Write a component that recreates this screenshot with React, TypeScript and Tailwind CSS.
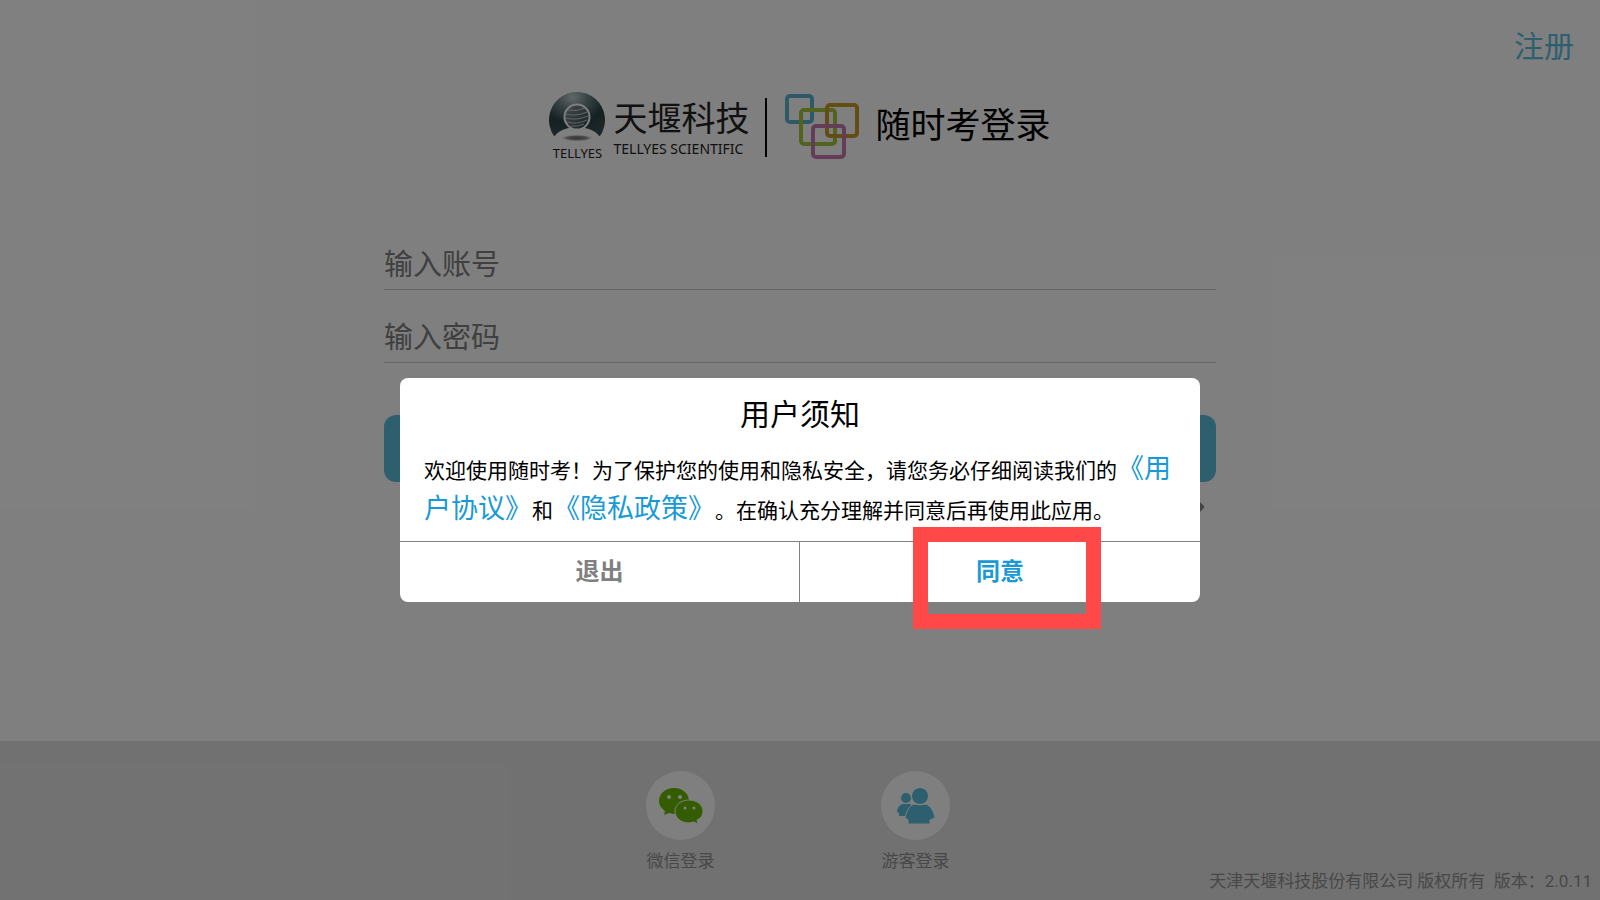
import { ChevronRight } from "lucide-react";
import { useState } from "react";

function TellyesMark() {
  return (
    <svg width="56" height="52" viewBox="0 0 56 52" aria-hidden="true">
      <defs>
        <radialGradient id="ball" cx="0.42" cy="0.12" r="0.9">
          <stop offset="0" stopColor="#c4d0d0" />
          <stop offset="0.3" stopColor="#71868a" />
          <stop offset="0.65" stopColor="#2b4248" />
          <stop offset="1" stopColor="#3c4c52" />
        </radialGradient>
        <radialGradient id="shade">
          <stop offset="0" stopColor="#666" />
          <stop offset="0.6" stopColor="#999" />
          <stop offset="1" stopColor="#fff" stopOpacity="0" />
        </radialGradient>
        <linearGradient id="core" x1="0" y1="0" x2="1" y2="1">
          <stop offset="0" stopColor="#8a9a9e" />
          <stop offset="1" stopColor="#2e4046" />
        </linearGradient>
      </defs>
      <path d="M5 46A28 28 0 1 1 51 46Z" fill="url(#ball)" />
      <path d="M5 47C9 41 15 39 20 38L28 35L36 38C41 39 47 41 51 47V52H5Z" fill="#fff" />
      <circle cx="28" cy="27" r="12.5" fill="url(#core)" stroke="#fff" strokeWidth="2" />
      <g stroke="#c3cccd" strokeWidth="1" fill="none">
        <path d="M19 20q8 2 17-2" />
        <path d="M17 24q9 3 21-2" />
        <path d="M17 28q10 3 22-2" />
        <path d="M18 32q9 3 20-2" />
        <path d="M22 36q7 1 13-2" />
      </g>
      <ellipse cx="28" cy="48" rx="17" ry="3.5" fill="url(#shade)" />
    </svg>
  );
}

function SquaresMark() {
  return (
    <svg width="76" height="66" viewBox="0 0 76 66" fill="none" strokeWidth="4" aria-hidden="true">
      <rect x="4" y="2" width="25" height="26" rx="3" stroke="#5cb4d0" />
      <rect x="18" y="16" width="34" height="34" rx="3" stroke="#a4c63c" />
      <rect x="44" y="11" width="30" height="31" rx="3" stroke="#c69a2a" />
      <rect x="30" y="32" width="31" height="31" rx="3" stroke="#c77ab0" />
    </svg>
  );
}

function WechatIcon() {
  return (
    <svg width="46" height="38" viewBox="0 0 46 38" aria-hidden="true">
      <path d="M16 1C7 1 1 7 1 14C1 18 3 21 7 24L6 28L11 26Q14 27 18 27C26 27 31 21 31 14C31 7 25 1 16 1Z" fill="#68b800" />
      <path d="M31 13C23 13 17 18 17 24C17 31 23 36 31 36L36 35L40 37L39 33C43 31 45 28 45 24C45 18 39 13 31 13Z" fill="#68b800" stroke="#fff" />
      <g fill="#fff">
        <circle cx="11" cy="10" r="2" />
        <circle cx="22" cy="10" r="2" />
        <circle cx="27" cy="21" r="1.5" />
        <circle cx="36" cy="21" r="1.5" />
      </g>
    </svg>
  );
}

function GuestIcon() {
  return (
    <svg width="38" height="38" viewBox="0 0 38 38" fill="#5bbfdf" aria-hidden="true">
      <circle cx="9" cy="11" r="5" />
      <path d="M5 17H13L16 19V29H2V26L0 25C0 21 2 19 5 17Z" />
      <circle cx="23" cy="9" r="8" />
      <path d="M17 17Q23 19 29 17C34 19 37 25 38 31L33 33V37H11V33L8 31C9 25 12 19 17 17Z" stroke="#fff" />
    </svg>
  );
}

const fields = [
  { id: "account", type: "text", placeholder: "输入账号" },
  { id: "password", type: "password", placeholder: "输入密码" },
];

const logins = [
  { label: "微信登录", icon: <WechatIcon /> },
  { label: "游客登录", icon: <GuestIcon /> },
];

export default function App() {
  const [open, setOpen] = useState(true);

  return (
    <div className="relative flex min-h-screen flex-col bg-white font-[Roboto,'Noto_Sans_CJK_SC',sans-serif] text-black">
      {/* Top bar */}
      <header className="flex justify-end px-[26px] pt-6">
        <a href="#register" className="text-[30px] leading-[46px] text-[#5bbfdf]">注册</a>
      </header>

      <main className="flex flex-1 flex-col items-center">
        {/* Brand */}
        <div className="mt-5 flex items-center">
          <div className="flex flex-col items-center">
            <TellyesMark />
            <span className="font-['Noto_Sans',sans-serif] text-[13px] leading-[22px] text-[#222]">TELLYES</span>
          </div>
          <div className="ml-2 flex flex-col pt-1 text-[#222]">
            <span className="text-[34px] leading-10">天堰科技</span>
            <span className="font-['Noto_Sans',sans-serif] text-[14px] leading-5">TELLYES SCIENTIFIC</span>
          </div>
          <div className="mx-4 h-[59px] w-[2px] bg-black" />
          <SquaresMark />
          <h1 className="ml-4 text-[35px] leading-[52px]">随时考登录</h1>
        </div>

        {/* Login form */}
        <form className="mt-[77px] w-[52%]" onSubmit={(e) => e.preventDefault()}>
          {fields.map((field) => (
            <div key={field.id} className="mb-6 border-b border-[#c8c8c8]">
              <input
                id={field.id}
                type={field.type}
                aria-label={field.placeholder}
                placeholder={field.placeholder}
                className="block h-12 w-full bg-transparent text-[29px] outline-none placeholder:text-[#808080]"
              />
            </div>
          ))}
          <button type="submit" className="mt-7 h-[67px] w-full rounded-xl bg-[#5bbfdf] text-[29px] text-white">
            登录
          </button>
          <div className="mt-3 flex justify-end pr-1.5">
            <a href="#forgot" className="flex items-center text-[17px] text-[#888]">
              忘记密码
              <ChevronRight size={20} strokeWidth={4} />
            </a>
          </div>
        </form>
      </main>

      {/* Other ways to log in */}
      <footer className="flex h-[159px] flex-col bg-[#e3e3e3] text-[17px] text-[#909090]">
        <div className="flex justify-center gap-[166px] pt-[30px] pr-1">
          {logins.map((login) => (
            <button key={login.label} className="flex flex-col items-center gap-[9px]">
              <span className="flex size-[69px] items-center justify-center rounded-full bg-white">{login.icon}</span>
              <span className="leading-6">{login.label}</span>
            </button>
          ))}
        </div>
        <p className="-mt-1 whitespace-pre pr-2 text-right leading-6">天津天堰科技股份有限公司 版权所有  版本：2.0.11</p>
      </footer>

      {/* User notice */}
      {open && (
        <div className="absolute inset-0 flex items-center justify-center bg-black/50 pt-20">
          <section role="dialog" aria-labelledby="notice" className="w-1/2 rounded-lg bg-white">
            <h2 id="notice" className="pt-3 text-center text-[30px] leading-[50px]">用户须知</h2>
            <p className="px-6 pt-[10px] pb-[11px] text-[21px] leading-[38px] [text-spacing-trim:space-all]">
              欢迎使用随时考！为了保护您的使用和隐私安全，请您务必仔细阅读我们的
              <a href="#agreement" className="text-[27px] text-[#189ad6]">《用户协议》</a>和
              <a href="#privacy" className="text-[27px] text-[#189ad6]">《隐私政策》</a>
              。在确认充分理解并同意后再使用此应用。
            </p>
            <div className="grid grid-cols-2 border-t border-[#808080] text-2xl font-bold">
              <button onClick={() => setOpen(false)} className="h-[60px] border-r border-[#808080] text-[#808080]">
                退出
              </button>
              <div className="relative">
                <button onClick={() => setOpen(false)} className="h-[60px] w-full text-[#189ad6]">
                  同意
                </button>
                <div className="pointer-events-none absolute -top-[15px] left-[113px] h-[102px] w-[188px] border-[15px] border-[#ff4848]" />
              </div>
            </div>
          </section>
        </div>
      )}
    </div>
  );
}
